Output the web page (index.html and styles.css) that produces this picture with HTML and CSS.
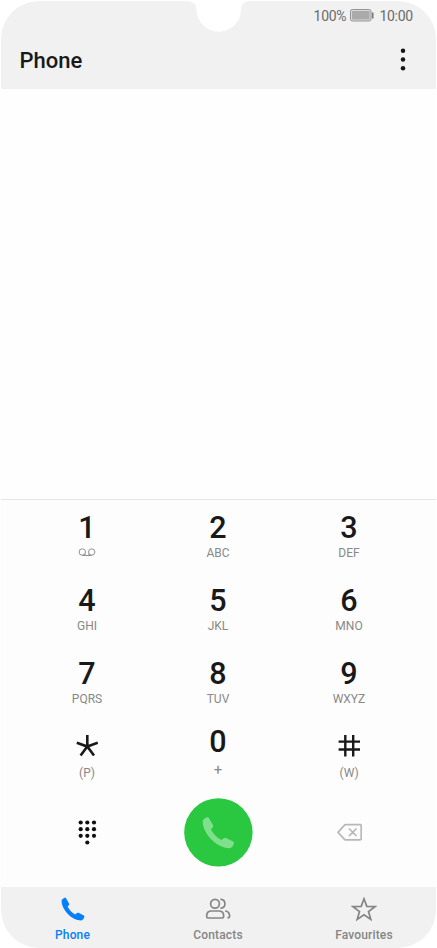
FILE: index.html
```html
<!DOCTYPE html>
<html lang="en">
<head>
<meta charset="utf-8">
<title>Phone</title>
<link rel="stylesheet" href="styles.css">
</head>
<body>
<div class="screen">
  <svg class="notch" width="70" height="32" viewBox="0 0 70 32"><path d="M2 0V1Q12.500 1 12.500 9.500A22.200 22.200 0 0 0 57 9.500Q57 1 67 1V0Z" fill="#fff"/></svg>
  <header class="top">
    <div class="status">
      <span>100%</span>
      <svg width="25" height="13" viewBox="0 0 25 13"><rect x=".5" y=".5" width="20.500" height="11.500" rx="1.800" fill="#d8d8d8" stroke="#959595"/><rect x="2" y="2" width="17.500" height="8.500" fill="#aaa"/><path d="M22.700 3.500v6" stroke="#777" stroke-width="1.600"/></svg>
      <span>10:00</span>
    </div>
    <div class="titlebar">
      <h1>Phone</h1>
      <svg width="6" height="24" viewBox="0 0 6 24" fill="#151515"><circle cx="3" cy="2.800" r="2.250"/><circle cx="3" cy="11.500" r="2.250"/><circle cx="3" cy="20.300" r="2.250"/></svg>
    </div>
  </header>
  <main class="log"></main>
  <section class="dialer">
    <div class="keys">
      <div class="key"><b>1</b><svg class="voicemail" width="18" height="9" viewBox="0 0 18 9" fill="none" stroke="#929292"><circle cx="4.300" cy="4" r="3.200"/><circle cx="13.700" cy="4" r="3.200"/><path d="M4 7.500h10M7 5.500v2M11 5.500v2"/></svg></div>
      <div class="key"><b>2</b><span>ABC</span></div>
      <div class="key"><b>3</b><span>DEF</span></div>
      <div class="key"><b>4</b><span>GHI</span></div>
      <div class="key"><b>5</b><span>JKL</span></div>
      <div class="key"><b>6</b><span>MNO</span></div>
      <div class="key"><b>7</b><span>PQRS</span></div>
      <div class="key"><b>8</b><span>TUV</span></div>
      <div class="key"><b>9</b><span>WXYZ</span></div>
      <div class="key symbol"><svg width="22" height="22" viewBox="0 0 22 22" fill="none" stroke="#191919" stroke-width="2.600"><path d="M11.300 0v11.500M.8 7.700L11.300 11.500 21.800 7.700M4.600 20.500L11.300 11.500l6.700 9"/></svg><span>(P)</span></div>
      <div class="key zero"><b>0</b><span class="plus">+</span></div>
      <div class="key symbol"><svg width="22" height="22" viewBox="0 0 22 22" fill="none" stroke="#191919" stroke-width="2.400"><path d="M7.300 0v21.500M15.200 0v21.500M.6 6.600H22M.6 14.500H22"/></svg><span>(W)</span></div>
    </div>
    <div class="actions">
      <svg width="20" height="26" viewBox="0 0 20 26" fill="#111"><circle cx="3.700" cy="3.500" r="2.100"/><circle cx="10.300" cy="3.500" r="2.100"/><circle cx="17" cy="3.500" r="2.100"/><circle cx="3.700" cy="10.200" r="2.100"/><circle cx="10.300" cy="10.200" r="2.100"/><circle cx="17" cy="10.200" r="2.100"/><circle cx="3.700" cy="16.800" r="2.100"/><circle cx="10.300" cy="16.800" r="2.100"/><circle cx="17" cy="16.800" r="2.100"/><circle cx="10.300" cy="23.500" r="2.100"/></svg>
      <svg width="70" height="70" viewBox="0 0 70 70"><circle cx="35.400" cy="35.400" r="34.200" fill="#29c840"/><path transform="translate(19.300 19.600) scale(1.330)" fill="#7fdf8b" d="M.3 3.500C.5 2 2 .9 3.600.4q.8-.3 1.300.6L8 6.300q.5.900-.1 1.700L6.500 9.700c1.900 3.400 4.400 6 7.900 7.900l1.700-1.400q.8-.6 1.700-.2l5.400 2.700q.8.500.6 1.300c-.5 2-1.700 3.600-3.300 3.800C11 23.800.3 12.900.3 3.500Z"/></svg>
      <svg width="26" height="18" viewBox="0 0 26 18" fill="none" stroke="#b8b8b8" stroke-width="1.700" stroke-linejoin="round"><path d="M9 1.700h15q1.200 0 1.200 1.200v12.800q0 1.200-1.200 1.200H9L2 9.300ZM13 5.500l7.500 7.500M20.500 5.500L13 13"/></svg>
    </div>
  </section>
  <nav class="tabs">
    <div class="tab active"><svg width="24" height="24" viewBox="-.3 -.3 24.700 24.700" fill="currentColor"><path d="M.3 3.500C.5 2 2 .9 3.600.4q.8-.3 1.300.6L8 6.300q.5.900-.1 1.700L6.500 9.700c1.900 3.400 4.400 6 7.900 7.900l1.700-1.400q.8-.6 1.700-.2l5.400 2.700q.8.500.6 1.300c-.5 2-1.700 3.600-3.300 3.800C11 23.800.3 12.900.3 3.500Z"/></svg><span>Phone</span></div>
    <div class="tab"><svg width="26" height="24" viewBox="0 0 26 24" fill="none" stroke="currentColor" stroke-width="1.700" stroke-linecap="round" stroke-linejoin="round"><circle cx="10" cy="6.700" r="4.400"/><path d="M16 2.300c5.200.6 5.200 8.200 0 8.800M3 21h14.300q1.300 0 1.300-1.300v-1.200q0-4.500-5-4.500H6.700q-5 0-5 4.500v1.200Q1.700 21 3 21ZM20.800 14c3 .6 3.800 2.600 3.800 5.300q0 1.400-1.500 1.500"/></svg><span>Contacts</span></div>
    <div class="tab"><svg width="26" height="24" viewBox="0 0 26 24" fill="none" stroke="currentColor" stroke-width="1.700" stroke-linejoin="miter"><path d="M13 1.800l2.800 7.600 8.300.2-6.600 5 2.300 7.800L13 17.800l-6.800 4.600 2.300-7.800-6.600-5 8.300-.2Z"/></svg><span>Favourites</span></div>
  </nav>
</div>
</body>
</html>
```
FILE: styles.css
```css
* { box-sizing: border-box; }
body {
  margin: 0;
  padding: 1px 1px 0 1px;
  height: 948px;
  overflow: hidden;
  background: #fff;
  font-family: Roboto, sans-serif;
  color: #191919;
}
svg { display: block; flex: none; }
.screen {
  position: relative;
  height: 947px;
  display: flex;
  flex-direction: column;
  overflow: hidden;
  border-radius: 38px;
  background: #fefefe;
}
.notch { position: absolute; left: 183px; top: -1px; }
.top { height: 88px; background: #f1f1f1; }
.status {
  display: flex;
  align-items: center;
  justify-content: flex-end;
  gap: 4px;
  height: 29px;
  padding-right: 23px;
  font-size: 14px;
  line-height: 16px;
  letter-spacing: -.25px;
  color: #6b6b6b;
}
.titlebar {
  display: flex;
  align-items: center;
  justify-content: space-between;
  height: 60px;
  padding: 0 30px 0 18.500px;
}
h1 { margin: 2px 0 0; font-size: 22px; line-height: 26px; font-weight: 500; }
.log { height: 410px; }
.dialer {
  height: 388px;
  border-top: 1px solid #e5e5e5;
  background: #fdfdfd;
}
.keys {
  display: grid;
  grid-template-columns: repeat(3, 131px);
  grid-auto-rows: 73px;
  margin-left: 20.500px;
}
.key {
  display: flex;
  flex-direction: column;
  align-items: center;
  gap: 3px;
  padding-top: 13px;
}
.key b { font-size: 30.500px; line-height: 30px; font-weight: 500; }
.key span { font-size: 12px; line-height: 14px; color: #888; }
.voicemail { margin-top: 2px; }
.symbol { padding-top: 16px; gap: 9px; }
.zero { padding-top: 8px; gap: 5px; }
.key .plus { font-size: 15px; line-height: 16px; }
.actions {
  display: grid;
  grid-template-columns: repeat(3, 131px);
  justify-items: center;
  align-items: center;
  height: 80px;
  margin-left: 20.500px;
}
.tabs {
  display: grid;
  grid-template-columns: 143px 148px 144px;
  height: 61px;
  background: #f1f1f1;
  color: #858585;
}
.tab {
  display: flex;
  flex-direction: column;
  align-items: center;
  gap: 7px;
  padding-top: 10px;
  font-size: 12px;
  line-height: 14px;
  font-weight: 500;
  letter-spacing: .15px;
}
.active { color: #087ffa; }
```
